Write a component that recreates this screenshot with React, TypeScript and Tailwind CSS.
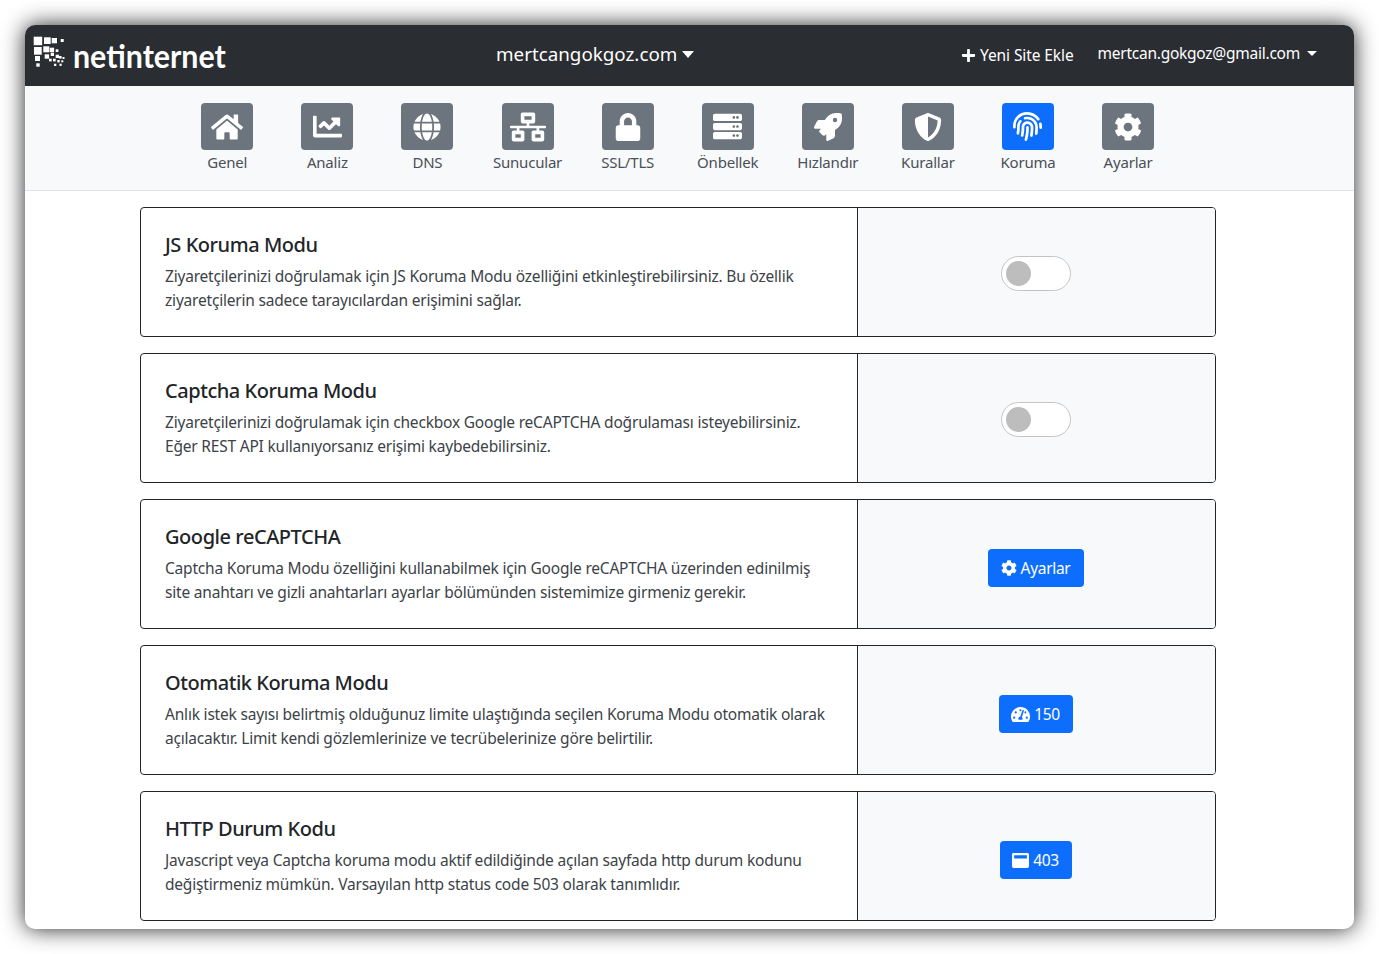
import React from "react";
import { FaHome, FaChartLine, FaGlobe, FaNetworkWired, FaLock, FaServer, FaRocket, FaShieldAlt, FaFingerprint, FaCog, FaPlus, FaTachometerAlt, FaWindowMaximize } from "react-icons/fa";

const navItems = [
  { label: "Genel", Icon: FaHome, size: "text-[32px]" },
  { label: "Analiz", Icon: FaChartLine, size: "text-[29px]" },
  { label: "DNS", Icon: FaGlobe, size: "text-[28px]" },
  { label: "Sunucular", Icon: FaNetworkWired, size: "text-[36px]" },
  { label: "SSL/TLS", Icon: FaLock, size: "text-[28px]" },
  { label: "Önbellek", Icon: FaServer, size: "text-[29px]" },
  { label: "Hızlandır", Icon: FaRocket, size: "text-[28px]" },
  { label: "Kurallar", Icon: FaShieldAlt, size: "text-[28px]" },
  { label: "Koruma", Icon: FaFingerprint, size: "text-[29px]", active: true },
  { label: "Ayarlar", Icon: FaCog, size: "text-[28px]" },
];

function Switch() {
  return (
    <div className="flex h-[35px] w-[70px] items-center rounded-full border border-[#c4c4c4] bg-white pl-[4px]">
      <div className="h-[25px] w-[25px] rounded-full bg-[#bdbdbd]" />
    </div>
  );
}

function Btn({ icon, label, w }: { icon: React.ReactNode; label: string; w: string }) {
  return (
    <div className={`mt-[1px] flex h-[38px] ${w} items-center justify-center gap-[4px] rounded-[4px] bg-[#0d6efd] text-[15.5px] tracking-[-0.3px] text-white`}>
      {icon}
      <span className="mt-[1px]">{label}</span>
    </div>
  );
}

const cards: { title: string; lines: [string, string]; control: React.ReactNode }[] = [
  {
    title: "JS Koruma Modu",
    lines: [
      "Ziyaretçilerinizi doğrulamak için JS Koruma Modu özelliğini etkinleştirebilirsiniz. Bu özellik",
      "ziyaretçilerin sadece tarayıcılardan erişimini sağlar.",
    ],
    control: <Switch />,
  },
  {
    title: "Captcha Koruma Modu",
    lines: [
      "Ziyaretçilerinizi doğrulamak için checkbox Google reCAPTCHA doğrulaması isteyebilirsiniz.",
      "Eğer REST API kullanıyorsanız erişimi kaybedebilirsiniz.",
    ],
    control: <Switch />,
  },
  {
    title: "Google reCAPTCHA",
    lines: [
      "Captcha Koruma Modu özelliğini kullanabilmek için Google reCAPTCHA üzerinden edinilmiş",
      "site anahtarı ve gizli anahtarları ayarlar bölümünden sistemimize girmeniz gerekir.",
    ],
    control: <Btn icon={<FaCog className="text-[16px]" />} label="Ayarlar" w="w-[96px]" />,
  },
  {
    title: "Otomatik Koruma Modu",
    lines: [
      "Anlık istek sayısı belirtmiş olduğunuz limite ulaştığında seçilen Koruma Modu otomatik olarak",
      "açılacaktır. Limit kendi gözlemlerinize ve tecrübelerinize göre belirtilir.",
    ],
    control: <Btn icon={<FaTachometerAlt className="text-[19px]" />} label="150" w="w-[74px]" />,
  },
  {
    title: "HTTP Durum Kodu",
    lines: [
      "Javascript veya Captcha koruma modu aktif edildiğinde açılan sayfada http durum kodunu",
      "değiştirmeniz mümkün. Varsayılan http status code 503 olarak tanımlıdır.",
    ],
    control: <Btn icon={<FaWindowMaximize className="text-[17px]" />} label="403" w="w-[72px]" />,
  },
];

const logoRects: [number, number, number][] = [
  [0.7, 0.7, 8.5], [11, 1.3, 6.7], [18.7, 2, 5.3], [27.7, 3, 3],
  [1, 11, 7.7], [10.3, 10.3, 6], [16.7, 11.7, 4.4], [22.7, 13.3, 2.7],
  [2, 20, 5], [11.7, 18.3, 4.4], [17.7, 16.7, 3.3], [22.7, 18.7, 3.3], [26, 20, 2.6],
  [3.3, 27.3, 3.4], [16, 22.7, 2.7], [20, 22.7, 2.7], [24.3, 24, 2.4], [28.3, 24.3, 2],
  [21, 27.7, 2.3], [26.5, 27.7, 2.2], [29.5, 21, 2],
];

export default function App() {
  return (
    <div className="min-h-[954px] bg-white p-[25px] font-['Noto_Sans',sans-serif] text-[#212529]">
      <div className="h-[904px] overflow-hidden rounded-[10px] bg-white shadow-[0_0_22px_rgba(0,0,0,0.85)]">
        <header className="flex h-[61px] items-center bg-[#2a2d31] text-white">
          <div className="flex w-[206px] shrink-0 items-center pl-[8px]">
            <svg width="33" height="33" viewBox="0 0 33 33" className="-mt-[6px] shrink-0" fill="#fff">
              {logoRects.map(([x, y, s], i) => (
                <rect key={i} x={x} y={y} width={s} height={s} />
              ))}
            </svg>
            <span className="ml-[7px] origin-left scale-x-[0.92] font-['Lato',sans-serif] text-[33px] leading-none font-bold whitespace-nowrap text-white">netinternet</span>
          </div>
          <div className="ml-[265px] flex items-center gap-[5px] text-[18.8px] leading-none">
            <span className="-mt-[2px]">mertcangokgoz.com</span>
            <span className="-mt-[1px] h-0 w-0 border-x-[6.5px] border-t-[7px] border-x-transparent border-t-white" />
          </div>
          <div className="ml-auto flex items-center pr-[37px]">
            <div className="flex items-center gap-[4px] text-[15.5px] tracking-[-0.1px]">
              <FaPlus className="text-[15px]" />
              <span>Yeni Site Ekle</span>
            </div>
            <div className="ml-[24px] flex items-center gap-[7px] text-[15.5px] tracking-[-0.25px]">
              <span className="-mt-[3px]">mertcan.gokgoz@gmail.com</span>
              <span className="-mt-[5px] h-0 w-0 border-x-[5px] border-t-[5px] border-x-transparent border-t-white" />
            </div>
          </div>
        </header>
        <nav className="flex h-[105px] border-b border-[#dee2e6] bg-[#f8f9fa] pl-[152.2px] pt-[17px]">
          {navItems.map(({ label, Icon, size, active }) => (
            <div key={label} className="flex w-[100.1px] flex-col items-center">
              <div className={`flex h-[47px] w-[52px] items-center justify-center rounded-[4px] text-white ${size} ${active ? "bg-[#0d6efd]" : "bg-[#6c757d]"}`}>
                <Icon />
              </div>
              <span className="text-[15px] leading-[24px] tracking-[-0.2px] text-[#495057]">{label}</span>
            </div>
          ))}
        </nav>
        <main className="flex flex-col gap-[16px] pl-[115px] pt-[16px]">
          {cards.map((c) => (
            <section key={c.title} className="flex h-[130px] w-[1076px] overflow-hidden rounded-[4px] border border-[#212529]">
              <div className="w-[717px] border-r border-[#212529] pl-[24px] pt-[22px]">
                <h2 className="text-[20px] leading-[30px] font-medium tracking-[-0.45px] text-[#212529]">{c.title}</h2>
                <p className="mt-[4px] text-[15.5px] leading-[24px] tracking-[-0.2px] whitespace-nowrap text-[#3c4248]">
                  {c.lines[0]}
                  <br />
                  {c.lines[1]}
                </p>
              </div>
              <div className="flex flex-1 justify-center bg-[#f8f9fa] pr-[2px] pt-[48px]">{c.control}</div>
            </section>
          ))}
        </main>
      </div>
    </div>
  );
}
